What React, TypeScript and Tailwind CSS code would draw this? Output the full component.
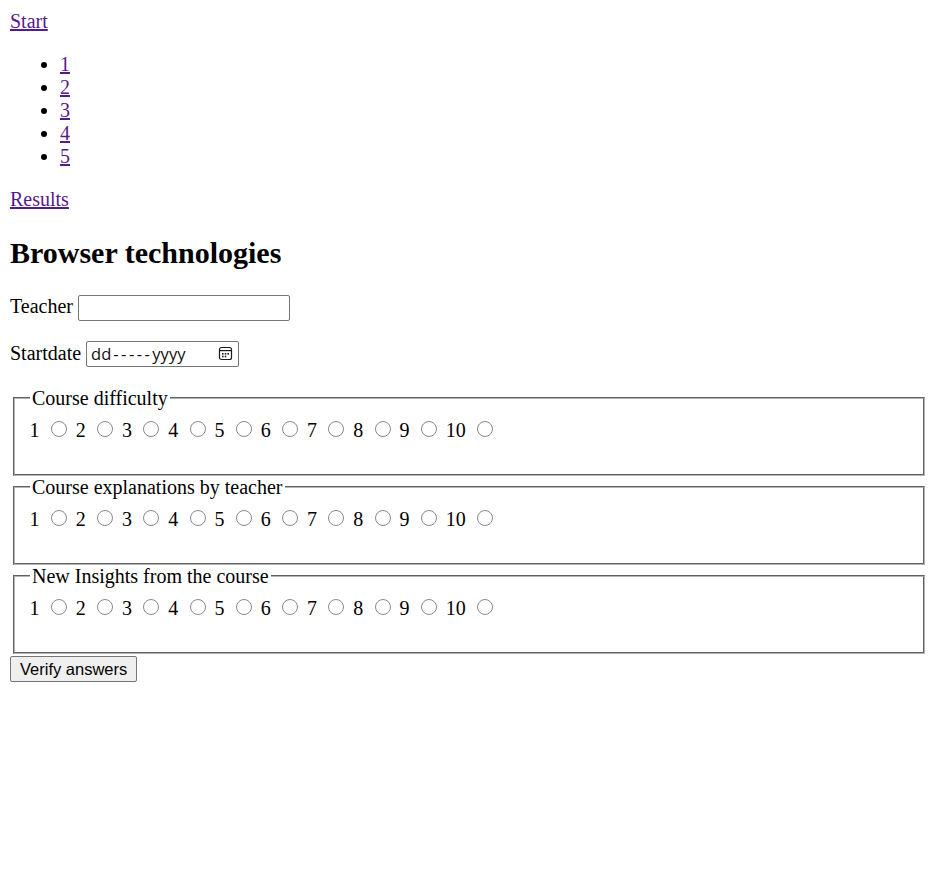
import React from 'react';

const questions = [
  'Course difficulty',
  'Course explanations by teacher',
  'New Insights from the course',
];

const scores = [1, 2, 3, 4, 5, 6, 7, 8, 9, 10];

function CalendarIcon() {
  return (
    <svg width="15" height="15" viewBox="0 0 15 15" fill="none">
      <rect x="1.5" y="1.5" width="12" height="12" rx="2" stroke="#1a1a1a" strokeWidth="1.2" />
      <line x1="1.5" y1="4.6" x2="13.5" y2="4.6" stroke="#1a1a1a" strokeWidth="1.2" />
      <rect x="4" y="7" width="1.6" height="1.6" fill="#1a1a1a" />
      <rect x="6.7" y="7" width="1.6" height="1.6" fill="#1a1a1a" />
      <rect x="9.4" y="7" width="1.6" height="1.6" fill="#1a1a1a" />
      <rect x="4" y="9.7" width="1.6" height="1.6" fill="#1a1a1a" />
      <rect x="6.7" y="9.7" width="1.6" height="1.6" fill="#1a1a1a" />
    </svg>
  );
}

function Rating({ title }: { title: string }) {
  return (
    <fieldset className="mx-[2.5px] border-2 [border-style:groove] border-[#b4b4b4] px-[15px] pt-[7px] pb-[12.5px] min-w-0">
      <legend className="px-[2.5px] leading-[23px]">{title}</legend>
      <div className="h-[44.5px] leading-[23px]">
        {scores.map((n) => (
          <React.Fragment key={n}>
            {n}{' '}
            <input
              type="radio"
              name={title}
              className="appearance-none inline-block w-4 h-4 rounded-full border border-[#8a8a8a] bg-white ml-[6.25px] mr-[4px] mt-[4px] align-baseline"
            />{' '}
          </React.Fragment>
        ))}
      </div>
    </fieldset>
  );
}

export default function App() {
  return (
    <div className="px-[10px] pt-[10px] pb-[10px] font-['Liberation_Serif',serif] text-[20px] leading-[23px] text-black bg-white min-h-screen">
      <div>
        <a href="#" className="text-[#551a8b] underline">Start</a>
      </div>
      <ul className="list-disc pl-[50px] my-[20px]">
        {[1, 2, 3, 4, 5].map((n) => (
          <li key={n}>
            <a href="#" className="text-[#551a8b] underline">{n}</a>
          </li>
        ))}
      </ul>
      <div>
        <a href="#" className="text-[#551a8b] underline">Results</a>
      </div>

      <h2 className="text-[30px] font-bold leading-[34.5px] mt-[25px] mb-[24px]">Browser technologies</h2>

      <form>
        <p className="flex items-baseline">
          <span>Teacher&nbsp;</span>
          <input
            type="text"
            className="w-[212px] h-[26px] border border-[#767676] rounded-[2px] px-[3px] bg-white font-['Liberation_Sans',sans-serif] text-[16.5px]"
          />
        </p>
        <p className="flex items-baseline mt-[20px] mb-[20px]">
          <span>Startdate&nbsp;</span>
          <span className="inline-flex items-center w-[153px] h-[26px] border border-[#767676] rounded-[2px] pl-[4px] pr-[5px] font-['Open_Sans',sans-serif] text-[16.5px] leading-[24px] text-[#111]">
            <span>dd</span>
            <span className="tracking-[2.5px] ml-[2px]">-----</span>
            <span>yyyy</span>
            <span className="ml-auto flex items-center">
              <CalendarIcon />
            </span>
          </span>
        </p>

        {questions.map((q) => (
          <Rating key={q} title={q} />
        ))}

        <button
          type="button"
          className="mt-[2px] h-[26px] px-[9px] border border-[#767676] rounded-[2px] bg-[#efefef] font-['Liberation_Sans',sans-serif] text-[16.5px] leading-[20px] text-black"
        >
          Verify answers
        </button>
      </form>
    </div>
  );
}
